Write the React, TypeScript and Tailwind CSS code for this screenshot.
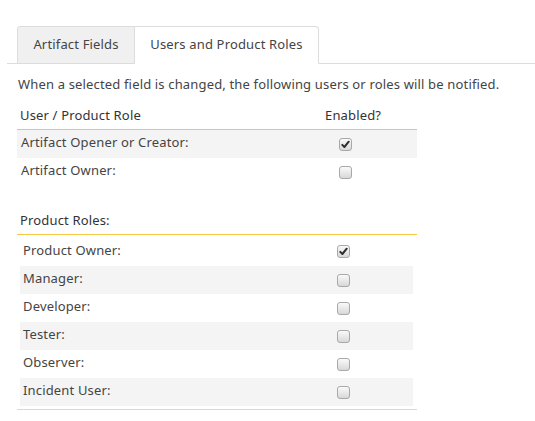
import React from "react";

function Box({ checked }: { checked?: boolean }) {
  return (
    <span className="inline-flex h-[13px] w-[13px] items-center justify-center rounded-[3px] border border-[#a8a8a8] bg-gradient-to-b from-[#fafafa] to-[#d8d8d8]">
      {checked && (
        <svg width="9" height="9" viewBox="0 0 9 9">
          <path d="M1.3 4.9 L3.4 7 L7.7 1.7" fill="none" stroke="#2e2e2e" strokeWidth="2" strokeLinecap="round" strokeLinejoin="round" />
        </svg>
      )}
    </span>
  );
}

export default function App() {
  const rows: [string, boolean][] = [
    ["Manager:", true],
    ["Developer:", false],
    ["Tester:", true],
    ["Observer:", false],
    ["Incident User:", true],
  ];
  return (
    <div
      className="min-h-[421px] bg-white text-[13px] tracking-[0.16px] text-[#444]"
      style={{ fontFamily: '"Noto Sans", sans-serif' }}
    >
      <div className="pt-[26px] pl-[7px]">
        <div className="flex border-b border-[#dcdcdc] pl-[10px]">
          <div className="-mb-px flex h-[38px] w-[118px] items-center justify-center rounded-tl-[3px] border border-[#dcdcdc] bg-[#f0f0f0]">
            Artifact Fields
          </div>
          <div className="-mb-px flex h-[38px] w-[184px] items-center justify-center rounded-tr-[4px] border-t border-r border-b border-[#dcdcdc] border-b-white bg-white">
            Users and Product Roles
          </div>
        </div>
      </div>
      <div className="pl-[17px]">
        <div className="pt-[10px] pl-[1px] leading-[20px]">
          When a selected field is changed, the following users or roles will be notified.
        </div>
        <div className="mt-[9px] w-[400px]">
          <div className="flex h-[27px] items-center border-b border-[#f6c744] text-[#333]">
            <span className="flex-1 pl-[3px]">User / Product Role</span>
            <span className="w-[92px]">Enabled?</span>
          </div>
          <div className="flex h-[28px] items-center bg-[#f4f4f4] pb-[2px]">
            <span className="flex-1 pl-[4px]">Artifact Opener or Creator:</span>
            <span className="flex w-[78px] pt-[2px]">
              <Box checked />
            </span>
          </div>
          <div className="flex h-[28px] items-center pb-[2px]">
            <span className="flex-1 pl-[4px]">Artifact Owner:</span>
            <span className="flex w-[78px] pt-[2px]">
              <Box />
            </span>
          </div>
          <div className="mt-[22px] flex h-[27px] items-center border-b border-[#f6c744] text-[#333]">
            <span className="pl-[3px]">Product Roles:</span>
          </div>
          <div className="border-b border-[#d9d9d9] pb-[3px] pl-[3px]">
            <div className="flex h-[31px] items-center pt-[1px]">
              <span className="flex-1 pl-[3px]">Product Owner:</span>
              <span className="flex w-[80px]">
                <Box checked />
              </span>
            </div>
            {rows.map(([l, g]) => (
              <div key={l} className={`mr-[4px] flex h-[28px] items-center pb-[2px] ${g ? "bg-[#f4f4f4]" : ""}`}>
                <span className="flex-1 pl-[3px]">{l}</span>
                <span className="flex w-[76px] pt-[2px]">
                  <Box />
                </span>
              </div>
            ))}
          </div>
        </div>
      </div>
    </div>
  );
}
